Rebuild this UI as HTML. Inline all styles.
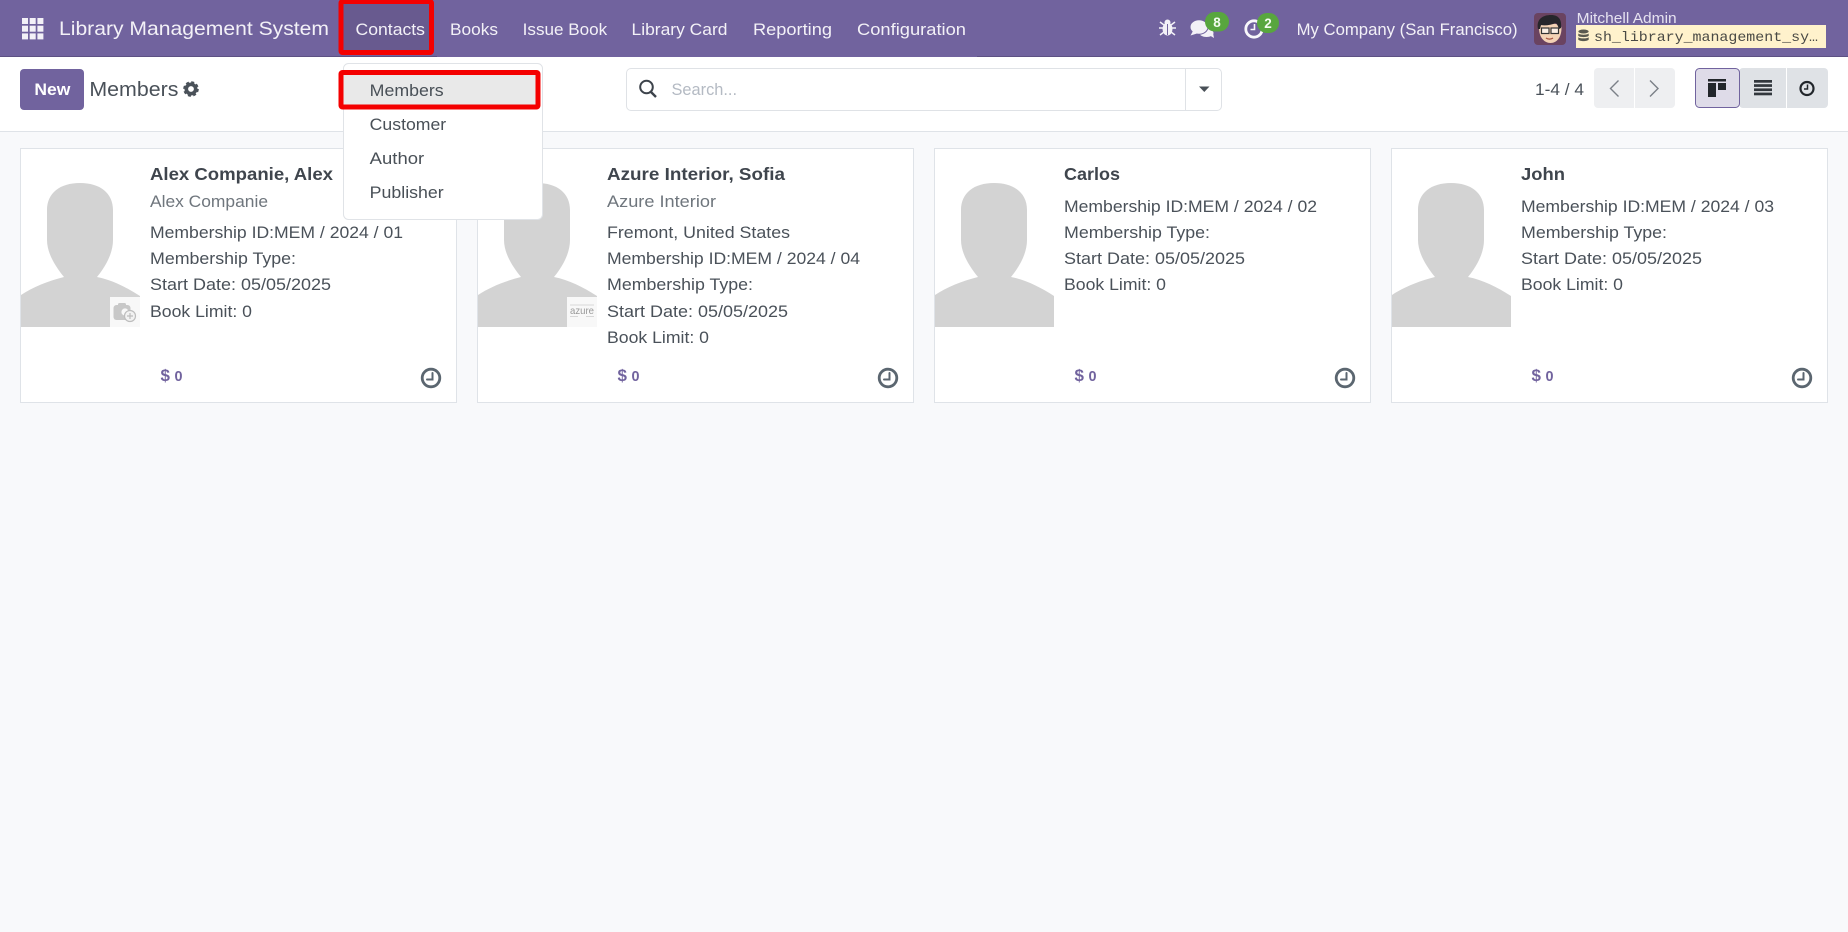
<!DOCTYPE html>
<html><head><meta charset="utf-8"><title>Members</title>
<style>
html,body{margin:0;padding:0;width:1848px;height:932px;overflow:hidden;background:#f8f9fb}
svg{display:block;position:absolute;left:0;top:0}
text{font-family:"Liberation Sans",sans-serif;font-size:16.5px;fill:#4a5159}
.nav{fill:#f3f1f7}
.t{font-size:17.5px;font-weight:bold;fill:#3f454d}
.s{fill:#6f767d}
.m{fill:#71639e;font-weight:bold;font-size:15px}
.dd{fill:#495057}
.b{font-size:13.5px;fill:#f4fbf0;font-weight:bold;text-anchor:middle}
</style></head><body>
<svg width="1848" height="932" viewBox="0 0 1848 932" xmlns="http://www.w3.org/2000/svg">
<defs>
<path id="sil" fill="#d3d3d3" d="M21 295C33 287 48 281 64 277C55 266 47 253 47 240L47 210C47 193 60 183 80 183C100 183 113 193 113 210L113 240C113 253 106 266 97 277C112 280 126 287 140 296L140 327L21 327Z"/>
<g id="clk" fill="none" stroke="#5b6670" stroke-linecap="round"><circle cx="431" cy="378" r="8.8" stroke-width="2.8"/><path d="M432.5 373V379.5H427" stroke-width="2"/></g>
<g id="card">
<rect x="20.5" y="148.5" width="436" height="254" fill="#fff" stroke="#dfe3e8"/>
<use href="#sil"/>
<text x="160.5" y="381" class="m" style="font-size:17px">$</text>
<text x="174.5" y="381" class="m" textLength="8" lengthAdjust="spacingAndGlyphs">0</text>
<use href="#clk"/>
</g>
</defs>

<!-- navbar -->
<rect width="1848" height="57" fill="#71639e"/>
<rect x="0" y="56" width="437" height="1" fill="#5d5183"/>
<rect x="977" y="56" width="871" height="1" fill="#5d5183"/>
<rect x="341" y="2" width="90" height="50" fill="#685a8f"/>
<g fill="#f3f1f7">
<rect x="22" y="18" width="6" height="6"/><rect x="29.7" y="18" width="6" height="6"/><rect x="37.4" y="18" width="6" height="6"/>
<rect x="22" y="25.7" width="6" height="6"/><rect x="29.7" y="25.7" width="6" height="6"/><rect x="37.4" y="25.7" width="6" height="6"/>
<rect x="22" y="33.4" width="6" height="6"/><rect x="29.7" y="33.4" width="6" height="6"/><rect x="37.4" y="33.4" width="6" height="6"/>
</g>
<text x="59" y="35" class="nav" style="font-size:19.5px" textLength="270" lengthAdjust="spacingAndGlyphs">Library Management System</text>
<text x="355.5" y="35" class="nav" textLength="69.5" lengthAdjust="spacingAndGlyphs">Contacts</text>
<text x="450" y="35" class="nav" textLength="48" lengthAdjust="spacingAndGlyphs">Books</text>
<text x="522.7" y="35" class="nav" textLength="84.5" lengthAdjust="spacingAndGlyphs">Issue Book</text>
<text x="631.5" y="35" class="nav" textLength="96" lengthAdjust="spacingAndGlyphs">Library Card</text>
<text x="753" y="35" class="nav" textLength="79" lengthAdjust="spacingAndGlyphs">Reporting</text>
<text x="857" y="35" class="nav" textLength="109" lengthAdjust="spacingAndGlyphs">Configuration</text>

<!-- systray -->
<g fill="#f3f1f7">
<ellipse cx="1167.5" cy="29" rx="5" ry="6.5"/><circle cx="1167.5" cy="22.5" r="3"/>
<path d="M1160 22l4 3M1175 22l-4 3M1159 28h5M1176 28h-5M1160 35l4-3M1175 35l-4-3" stroke="#f3f1f7" stroke-width="1.5" fill="none"/>
<rect x="1167" y="24" width="1" height="11" fill="#71639e"/>
<ellipse cx="1206.5" cy="33" rx="7" ry="4"/><path d="M1209 35l5 3-1-5z"/>
<ellipse cx="1199" cy="27" rx="9" ry="7.2" stroke="#71639e" stroke-width="1"/><path d="M1193 31l-2.5 4.5 6.5-2z"/>
</g>
<circle cx="1254" cy="29" r="8.2" fill="none" stroke="#f8f7fb" stroke-width="2.8"/>
<path d="M1254.5 24v5.5h-4" fill="none" stroke="#f8f7fb" stroke-width="1.6"/>
<rect x="1205" y="12" width="24" height="19.5" rx="9.7" fill="#58a63e"/>
<text x="1217" y="27" class="b">8</text>
<rect x="1257" y="13" width="22" height="20" rx="10" fill="#58a63e"/>
<text x="1268" y="28" class="b">2</text>
<text x="1296.6" y="35" class="nav" textLength="221" lengthAdjust="spacingAndGlyphs">My Company (San Francisco)</text>

<!-- avatar -->
<rect x="1534" y="13" width="32" height="32" rx="4" fill="#6a4360"/>
<path d="M1539 28c0 9 5 15 11.500 15s11-6 11-15c0-6-22.500-6-22.500 0z" fill="#f3d2b5"/>
<path d="M1538 29c-2-10 5-14 13-14s11 5 10 13l-2 1c-1-3-2-5-3-6-5 2-11 3-15 2l-1 4z" fill="#26262b"/>
<rect x="1541.500" y="28" width="7.500" height="5.500" fill="#fff" fill-opacity=".65" stroke="#333" stroke-width="1.2"/>
<rect x="1551" y="28" width="7.500" height="5.500" fill="#fff" fill-opacity=".65" stroke="#333" stroke-width="1.2"/>
<path d="M1546 38c2 1.500 5 1.500 7 0" stroke="#a5523f" stroke-width="1.2" fill="none"/>

<text x="1576.7" y="23" class="nav" style="font-size:14.5px;fill:#e6e2f0" textLength="100" lengthAdjust="spacingAndGlyphs">Mitchell Admin</text>
<rect x="1576" y="25" width="250" height="23" fill="#fff2cc"/>
<g fill="#5a5a50"><ellipse cx="1583.5" cy="31.5" rx="5.2" ry="2"/><path d="M1578.3 33.5c1.5 1.6 9 1.6 10.4 0v2.4c-1.5 1.6-9 1.6-10.4 0zM1578.3 37.2c1.5 1.6 9 1.6 10.4 0v2.4c-1.5 2-9 2-10.4 0z"/></g>
<text x="1594" y="41" style="font-family:'Liberation Mono',monospace;font-size:14px;fill:#4a4a45" textLength="224" lengthAdjust="spacingAndGlyphs">sh_library_management_sy…</text>

<!-- control panel -->
<rect y="57" width="1848" height="74" fill="#fff"/>
<rect y="131" width="1848" height="1" fill="#dfe3e8"/>
<rect x="20" y="69" width="64" height="41" rx="4" fill="#71639e"/>
<text x="34.4" y="95" style="font-weight:bold;fill:#fff" textLength="36" lengthAdjust="spacingAndGlyphs">New</text>
<text x="89.4" y="96" style="font-size:20px;fill:#4a5159" textLength="89" lengthAdjust="spacingAndGlyphs">Members</text>
<circle cx="191" cy="89" r="4.7" fill="none" stroke="#4a5159" stroke-width="3.6"/>
<circle cx="191" cy="89" r="6.8" fill="none" stroke="#4a5159" stroke-width="2" stroke-dasharray="3 2.34"/>

<rect x="626.5" y="68.5" width="595" height="42" rx="4.5" fill="#fff" stroke="#dfe2e6"/>
<rect x="1185" y="69" width="1" height="41" fill="#dfe2e6"/>
<circle cx="646.5" cy="87" r="6.3" fill="none" stroke="#3d434b" stroke-width="2"/>
<path d="M651 92l5 5" stroke="#3d434b" stroke-width="2.4"/>
<text x="671.5" y="95" style="fill:#b4bac3" textLength="65.5" lengthAdjust="spacingAndGlyphs">Search...</text>
<path d="M1199 86.5h10.5l-5.2 5.5z" fill="#495057"/>

<text x="1535" y="95" textLength="49" lengthAdjust="spacingAndGlyphs" style="fill:#4a5159">1-4 / 4</text>
<rect x="1594" y="68" width="81" height="40" rx="4" fill="#eeeff1"/>
<rect x="1634" y="68" width="1" height="40" fill="#fff"/>
<path d="M1618.5 80.5l-8 8 8 8M1650 80.5l8 8-8 8" fill="none" stroke="#7b8087" stroke-width="1.4"/>

<rect x="1739" y="68" width="89" height="40" rx="4" fill="#dfe2e6"/>
<rect x="1786" y="68" width="1" height="40" fill="#fff"/>
<rect x="1695.5" y="68.5" width="44" height="39" rx="4" fill="#dedbe8" stroke="#71639e"/>
<rect x="1708" y="79" width="18" height="2.5" fill="#22262b"/>
<rect x="1708" y="83" width="8" height="14" fill="#22262b"/>
<rect x="1718" y="83" width="8" height="7" fill="#22262b"/>
<g fill="#32373d"><rect x="1754" y="80" width="18" height="2.7"/><rect x="1754" y="84.2" width="18" height="2.7"/><rect x="1754" y="88.4" width="18" height="2.7"/><rect x="1754" y="92.6" width="18" height="2.7"/></g>
<circle cx="1807" cy="88.5" r="6.5" fill="none" stroke="#22262b" stroke-width="2.2"/>
<path d="M1807.5 84.5v4.5h-3.5" fill="none" stroke="#22262b" stroke-width="1.5"/>

<!-- cards -->
<use href="#card"/>
<use href="#card" x="457"/>
<use href="#card" x="914"/>
<use href="#card" x="1371"/>

<!-- card 1 -->
<rect x="110" y="297" width="30" height="30" fill="#f8f8f8"/>
<rect x="113.5" y="305" width="17" height="15" rx="3" fill="#c8c8c8"/>
<rect x="118" y="303" width="8" height="4" rx="1.5" fill="#c8c8c8"/>
<circle cx="125" cy="312" r="3.6" fill="#f8f8f8"/>
<circle cx="130" cy="316" r="5.5" fill="#f2f2f2" stroke="#bdbdbd" stroke-width="1.2"/>
<path d="M130 313v6M127 316h6" stroke="#bdbdbd" stroke-width="1.2"/>
<text x="150" y="180" class="t" textLength="183" lengthAdjust="spacingAndGlyphs">Alex Companie, Alex</text>
<text x="150" y="207" class="s" textLength="118" lengthAdjust="spacingAndGlyphs">Alex Companie</text>
<text x="150" y="238" textLength="253" lengthAdjust="spacingAndGlyphs">Membership ID:MEM / 2024 / 01</text>
<text x="150" y="264" textLength="146" lengthAdjust="spacingAndGlyphs">Membership Type:</text>
<text x="150" y="290" textLength="181" lengthAdjust="spacingAndGlyphs">Start Date: 05/05/2025</text>
<text x="150" y="317" textLength="102" lengthAdjust="spacingAndGlyphs">Book Limit: 0</text>

<!-- card 2 -->
<rect x="567" y="297" width="30" height="30" fill="#f8f8f8"/>
<path d="M570 305h24M570 316.5h8M586 316.5h8" stroke="#b5b5b5" stroke-width=".6"/>
<text x="570" y="314" style="font-size:10.5px;fill:#999" textLength="24" lengthAdjust="spacingAndGlyphs">azure</text>
<text x="607" y="180" class="t" textLength="178" lengthAdjust="spacingAndGlyphs">Azure Interior, Sofia</text>
<text x="607" y="207" class="s" textLength="109" lengthAdjust="spacingAndGlyphs">Azure Interior</text>
<text x="607" y="238" textLength="183" lengthAdjust="spacingAndGlyphs">Fremont, United States</text>
<text x="607" y="264" textLength="253" lengthAdjust="spacingAndGlyphs">Membership ID:MEM / 2024 / 04</text>
<text x="607" y="290" textLength="146" lengthAdjust="spacingAndGlyphs">Membership Type:</text>
<text x="607" y="317" textLength="181" lengthAdjust="spacingAndGlyphs">Start Date: 05/05/2025</text>
<text x="607" y="343" textLength="102" lengthAdjust="spacingAndGlyphs">Book Limit: 0</text>

<!-- card 3 -->
<text x="1064" y="180" class="t" textLength="56" lengthAdjust="spacingAndGlyphs">Carlos</text>
<text x="1064" y="212" textLength="253" lengthAdjust="spacingAndGlyphs">Membership ID:MEM / 2024 / 02</text>
<text x="1064" y="238" textLength="146" lengthAdjust="spacingAndGlyphs">Membership Type:</text>
<text x="1064" y="264" textLength="181" lengthAdjust="spacingAndGlyphs">Start Date: 05/05/2025</text>
<text x="1064" y="290" textLength="102" lengthAdjust="spacingAndGlyphs">Book Limit: 0</text>

<!-- card 4 -->
<text x="1521" y="180" class="t" textLength="44" lengthAdjust="spacingAndGlyphs">John</text>
<text x="1521" y="212" textLength="253" lengthAdjust="spacingAndGlyphs">Membership ID:MEM / 2024 / 03</text>
<text x="1521" y="238" textLength="146" lengthAdjust="spacingAndGlyphs">Membership Type:</text>
<text x="1521" y="264" textLength="181" lengthAdjust="spacingAndGlyphs">Start Date: 05/05/2025</text>
<text x="1521" y="290" textLength="102" lengthAdjust="spacingAndGlyphs">Book Limit: 0</text>

<!-- dropdown -->
<rect x="343.5" y="63.5" width="199" height="156" rx="5" fill="#fff" stroke="#e0e3e7"/>
<rect x="341" y="72.5" width="197" height="34.5" fill="#e9e9e9"/>
<text x="369.7" y="96" class="dd" textLength="74" lengthAdjust="spacingAndGlyphs">Members</text>
<text x="369.7" y="130" class="dd" textLength="76.5" lengthAdjust="spacingAndGlyphs">Customer</text>
<text x="369.7" y="164" class="dd" textLength="54.5" lengthAdjust="spacingAndGlyphs">Author</text>
<text x="369.7" y="198" class="dd" textLength="74" lengthAdjust="spacingAndGlyphs">Publisher</text>

<!-- red highlights -->
<rect x="341" y="1.5" width="90.5" height="51" rx="1.5" fill="none" stroke="#f40000" stroke-width="5"/>
<rect x="341" y="72.5" width="197" height="34.5" rx="1.5" fill="none" stroke="#f40000" stroke-width="5"/>
</svg>
</body></html>
